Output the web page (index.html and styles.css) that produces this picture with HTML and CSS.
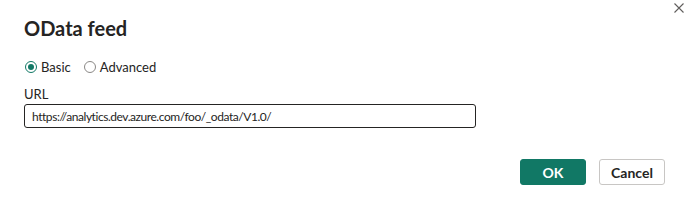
FILE: index.html
```html
<!DOCTYPE html>
<html lang="en">
<head>
  <meta charset="UTF-8">
  <title>OData feed</title>
  <link rel="stylesheet" href="styles.css">
</head>
<body>
  <div class="dialog">
    <button class="close-btn" aria-label="Close">
      <svg width="10" height="10" viewBox="0 0 10 10"><path d="M0.5 0.5 L9.5 9.5 M9.5 0.5 L0.5 9.5" stroke="#605e5c" stroke-width="1.1"/></svg>
    </button>
    <h1 class="title">OData feed</h1>

    <div class="options">
      <label class="radio"><span class="dot checked"></span>Basic</label>
      <label class="radio"><span class="dot"></span>Advanced</label>
    </div>

    <div class="field">
      <div class="field-label">URL</div>
      <input class="url-input" type="text" value="https://analytics.dev.azure.com/foo/_odata/V1.0/">
    </div>

    <div class="footer">
      <button class="btn btn-primary">OK</button>
      <button class="btn">Cancel</button>
    </div>
  </div>
</body>
</html>
```

FILE: styles.css
```css
body {
  margin: 0;
  font-family: Lato, "Noto Sans", sans-serif;
  background-color: #ffffff;
  color: #252423;
}
.dialog {
  position: relative;
  width: 690px;
  height: 209px;
  padding: 14px 0 0 24px;
  box-sizing: border-box;
}
.close-btn {
  position: absolute;
  top: 3px;
  right: 6px;
  width: 10px;
  height: 10px;
  padding: 0;
  border: none;
  background: none;
  line-height: 0;
}
.title {
  margin: 0;
  font-size: 20px;
  line-height: 28px;
  font-weight: 700;
  color: #252423;
}
.options {
  display: flex;
  gap: 12px;
  margin-top: 17px;
  font-size: 13px;
  line-height: 16px;
}
.radio {
  display: flex;
  align-items: center;
  gap: 4px;
}
.dot {
  width: 10px;
  height: 10px;
  border: 1px solid #8a8886;
  border-radius: 50%;
  position: relative;
  margin-left: 1px;
}
.dot.checked {
  border-color: #117865;
}
.dot.checked::after {
  content: "";
  position: absolute;
  top: 2px;
  left: 2px;
  width: 6px;
  height: 6px;
  border-radius: 50%;
  background-color: #117865;
}
.field {
  margin-top: 11px;
}
.field-label {
  font-size: 13px;
  line-height: 16px;
  margin-bottom: 2px;
}
.url-input {
  width: 452px;
  height: 24px;
  box-sizing: border-box;
  border: 1px solid #252423;
  border-radius: 3px;
  padding: 0 7px;
  font-family: inherit;
  font-size: 12px;
  letter-spacing: -0.45px;
  color: #252423;
  outline: none;
}
.footer {
  display: flex;
  justify-content: flex-end;
  gap: 13px;
  margin-top: 31px;
  padding-right: 25px;
}
.btn {
  width: 66px;
  height: 26px;
  border: 1px solid #c8c6c4;
  border-radius: 3px;
  background-color: #ffffff;
  font-family: inherit;
  font-size: 14px;
  font-weight: 700;
  color: #252423;
  padding: 0;
}
.btn-primary {
  background-color: #117865;
  border-color: #117865;
  color: #ffffff;
}
```
